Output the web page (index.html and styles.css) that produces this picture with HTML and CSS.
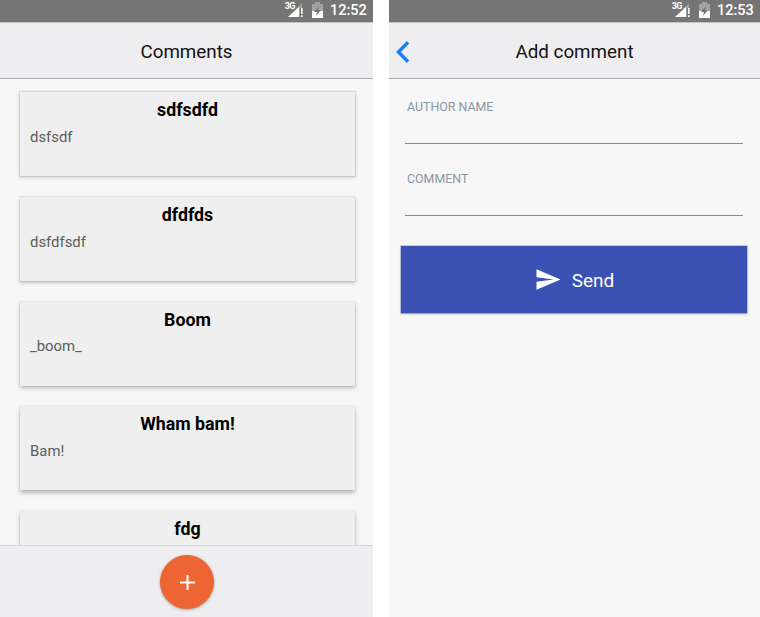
FILE: index.html
```html
<!DOCTYPE html>
<html lang="en">
<head>
<meta charset="utf-8">
<title>Comments</title>
<link rel="stylesheet" href="styles.css">
</head>
<body>
<main class="screens">
  <section class="screen">
    <div class="status">
      <svg class="signal" width="20" height="22" viewBox="0 0 20 22"><path d="M18 3V8H16V17H4Z" fill="#a2a2a2"/><path d="M15 7V17H4Z" fill="#fff"/><path d="M17 8h1.6v6h-1.6zM17 15.3h1.6v1.7h-1.6z" fill="#fff"/></svg>
      <span class="network">3G</span>
      <svg class="battery" width="11" height="22" viewBox="0 0 11 22"><path d="M0 4H3V2H8V4H11V11H0Z" fill="#a2a2a2"/><path d="M0 11H11V18H0Z" fill="#fff"/><path d="M7 6L2 12H5L4 16L9 10H6Z" fill="#757575"/></svg>
      <time>12:52</time>
    </div>
    <header class="header"><h1>Comments</h1></header>
    <div class="list">
      <article class="card depth-1"><h2>sdfsdfd</h2><p>dsfsdf</p></article>
      <article class="card depth-2"><h2>dfdfds</h2><p>dsfdfsdf</p></article>
      <article class="card depth-3"><h2>Boom</h2><p>_boom_</p></article>
      <article class="card depth-4"><h2>Wham bam!</h2><p>Bam!</p></article>
      <article class="card depth-4"><h2>fdg</h2></article>
    </div>
    <footer class="footer">
      <button class="add" aria-label="Add comment"><svg width="15" height="15" viewBox="0 0 15 15"><path d="M7.5 0V15M0 7.5H15" stroke="#fff" stroke-width="2"/></svg></button>
    </footer>
  </section>
  <section class="screen">
    <div class="status">
      <svg class="signal" width="20" height="22" viewBox="0 0 20 22"><path d="M18 3V8H16V17H4Z" fill="#a2a2a2"/><path d="M15 7V17H4Z" fill="#fff"/><path d="M17 8h1.6v6h-1.6zM17 15.3h1.6v1.7h-1.6z" fill="#fff"/></svg>
      <span class="network">3G</span>
      <svg class="battery" width="11" height="22" viewBox="0 0 11 22"><path d="M0 4H3V2H8V4H11V11H0Z" fill="#a2a2a2"/><path d="M0 11H11V18H0Z" fill="#fff"/><path d="M7 6L2 12H5L4 16L9 10H6Z" fill="#757575"/></svg>
      <time>12:53</time>
    </div>
    <header class="header">
      <svg class="back" width="14" height="22" viewBox="0 0 14 22"><path d="M12 1.2L2.5 11L12 20.8" fill="none" stroke="#157efb" stroke-width="3.4"/></svg>
      <h1>Add comment</h1>
    </header>
    <form class="form">
      <label class="field"><span>AUTHOR NAME</span><input type="text"></label>
      <label class="field"><span>COMMENT</span><input type="text"></label>
      <button class="send" type="button">
        <svg width="25" height="21" viewBox="0 0 25 21"><path d="M0.5 0.3L24.5 10.5L0.5 20.7V12.8L17.5 10.5L0.5 8.2Z" fill="#fff"/></svg>
        <span>Send</span>
      </button>
    </form>
  </section>
</main>
</body>
</html>
```
FILE: styles.css
```css
* { box-sizing: border-box; }
body { margin: 0; background: #fff; font-family: Roboto, sans-serif; }
h1, h2, p { margin: 0; }
button { border: 0; font: inherit; }
.screens { display: grid; grid-template-columns: 373px 371px; gap: 16px; height: 617px; overflow: hidden; }
.screen { display: flex; flex-direction: column; min-width: 0; height: 617px; background: #f7f7f7; overflow: hidden; }
.status { position: relative; flex: none; display: flex; justify-content: flex-end; height: 22px; padding-right: 6px; background: #757575; color: #fff; }
.signal { margin-right: 8px; }
.battery { margin-right: 7px; }
.network { position: absolute; right: 78px; top: 1px; font-size: 9px; line-height: 10px; font-weight: 700; letter-spacing: -.5px; }
.status time { width: 37px; font-size: 14.5px; line-height: 22px; font-weight: 500; white-space: nowrap; }
.header { position: relative; flex: none; height: 57px; border-top: 1px solid #c3c3c5; border-bottom: 1px solid #a7a7aa; background: #eeeef0; text-align: center; }
.header h1 { font-size: 18.8px; line-height: 58px; font-weight: 400; color: #111; }
.back { position: absolute; left: 7px; top: 18px; }
.list { flex: 1; min-height: 0; overflow: hidden; padding: 13px 18px 0 20px; display: flex; flex-direction: column; gap: 21px; }
.card { flex: none; height: 84px; padding: 6px 10px; background: #efefef; }
.card + .card { margin-top: -.2px; }
.depth-1 { box-shadow: 0 0 1px 1px rgba(0,0,0,.08), 0 1px 4px rgba(0,0,0,.22); }
.depth-2 { box-shadow: 0 0 1px 1px rgba(0,0,0,.06), 0 2px 4px rgba(0,0,0,.22); }
.depth-3 { box-shadow: 0 0 1px 1px rgba(0,0,0,.04), 0 2px 4px rgba(0,0,0,.25); }
.depth-4 { box-shadow: 0 0 1px 1px rgba(0,0,0,.03), 0 3px 4px rgba(0,0,0,.25); }
.card h2 { font-size: 17.8px; line-height: 24px; font-weight: 700; text-align: center; color: #000; }
.card p { margin-top: 3.7px; font-size: 14.9px; line-height: 22px; color: #5c5c5c; }
.footer { flex: none; height: 72px; padding: 9px 0 0 1px; border-top: 1px solid #d4d4d4; background: #eeeef0; display: flex; justify-content: center; align-items: flex-start; }
.add { width: 54px; height: 54px; padding: 0; border-radius: 50%; background: #ec6533; display: grid; place-items: center; box-shadow: 0 1px 3px rgba(0,0,0,.3); }
.form { padding: 0 13px 0 12px; }
.field { display: block; height: 72px; padding: 19px 4px 0; }
.field:first-child { height: 71px; }
.field span { display: block; height: 18px; padding-left: 2px; font-size: 12.4px; line-height: 18px; color: #8b959e; }
.field input { display: block; width: 100%; height: 28px; padding: 0; border: 0; border-bottom: 1px solid #8c8c8c; border-radius: 0; background: transparent; outline: 0; }
.field:last-of-type { padding-top: 20px; }
.send { width: 100%; height: 67px; margin-top: 24px; padding: 0 0 0 2px; display: flex; align-items: center; justify-content: center; gap: 11px; background: #3c51b4; color: #fff; font-size: 19px; box-shadow: 0 0 0 1px rgba(60,81,180,.25), 0 1px 2px rgba(0,0,0,.3); }
.send span { padding-top: 1px; }
```
